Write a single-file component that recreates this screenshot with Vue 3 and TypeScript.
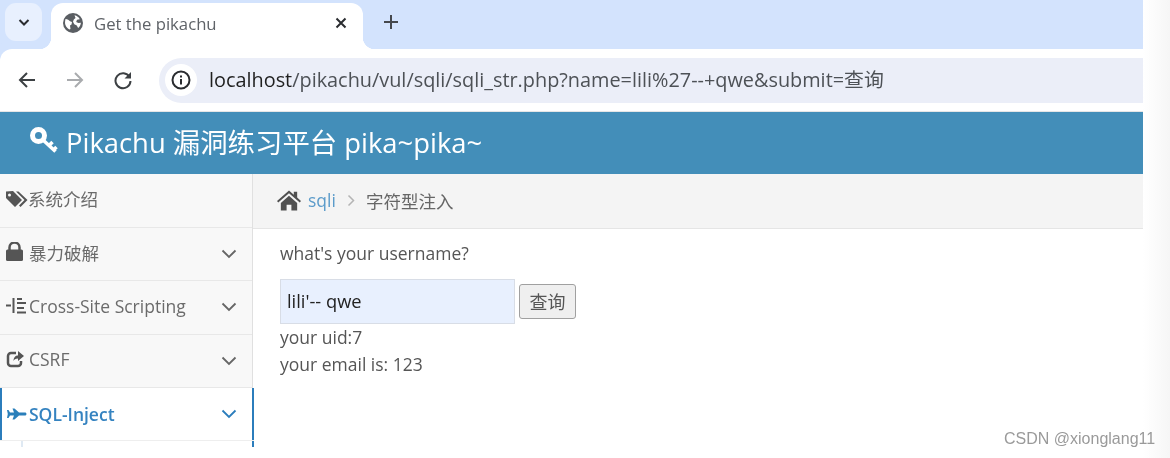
<template>
  <div class="shot">
    <div class="browser">
      <div class="tabstrip">
        <button class="tablist">
          <svg width="14" height="14" viewBox="0 0 14 14"><path d="M2.500 5l4.500 4.500L11.500 5" fill="none" stroke="#2a2c30" stroke-width="2" /></svg>
        </button>
        <div class="tab">
          <svg width="20" height="20" viewBox="0 0 20 20" class="globe">
            <circle cx="10" cy="10" r="10" fill="#5a5e63" />
            <path d="M2.500 6c2 .3 3.500 1 4.500 2.200l2 .8-.5 2.500-1.500 1 .5 3.500-1.200.5C4 15 2 12.500 2 10c0-1.500.2-2.800.5-4zM11.500 2.200c2.500.5 4.300 2 5.300 4l-2.800.6-.8 2.200 2.300 1 2.400-.2c-.2 2-1.200 4-2.800 5.200l-1.300-2.600-2.500-1.200-1.300-2.400.8-2.200 1.700-1.600z" fill="#fff" />
          </svg>
          <span class="tab-title">{{ tabTitle }}</span>
          <svg class="tab-close" width="12" height="12" viewBox="0 0 12 12"><path d="M1.500 1.500l9 9M10.500 1.500l-9 9" stroke="#2a2c30" stroke-width="2" /></svg>
        </div>
        <svg class="newtab" width="16" height="16" viewBox="0 0 16 16"><path d="M8 1v14M1 8h14" stroke="#45484d" stroke-width="2" /></svg>
      </div>
      <div class="toolbar">
        <svg class="nav" width="20" height="20" viewBox="0 0 20 20"><path d="M18 10H3M10 3l-7 7 7 7" fill="none" stroke="#3c4043" stroke-width="2" /></svg>
        <svg class="nav" width="20" height="20" viewBox="0 0 20 20"><path d="M2 10h15M10 3l7 7-7 7" fill="none" stroke="#a9abae" stroke-width="2" /></svg>
        <svg class="nav" width="20" height="20" viewBox="0 0 20 20"><path d="M16.500 7A7.500 7.500 0 1 0 17.500 11" fill="none" stroke="#3c4043" stroke-width="2" /><path d="M18 2v6.500h-6.500z" fill="#3c4043" /></svg>
        <div class="omnibox">
          <span class="site-info">
            <svg width="20" height="20" viewBox="0 0 20 20"><circle cx="10" cy="10" r="8.500" fill="none" stroke="#2a2c30" stroke-width="2" /><path d="M10 9v5.500M10 5.500v2" stroke="#2a2c30" stroke-width="2" /></svg>
          </span>
          <span class="url"><b>localhost</b>{{ urlPath }}</span>
        </div>
      </div>
    </div>

    <header class="navbar">
      <svg width="28" height="27" viewBox="0 0 28 27" class="key">
        <circle cx="8.500" cy="8.500" r="6" fill="none" stroke="#fff" stroke-width="5" />
        <path d="M12.500 12.500l13 12M19 18.500l3.500-3.500M23.500 23l3-3" fill="none" stroke="#fff" stroke-width="3.500" />
      </svg>
      <span>Pikachu 漏洞练习平台 pika~pika~</span>
    </header>

    <div class="main">
      <aside class="sidebar">
        <div v-for="item in menu" :key="item.label" class="item" :class="{ active: item.active }">
          <svg class="item-icon" width="24" height="20" viewBox="0 0 24 20" v-html="item.icon"></svg>
          <span class="item-label" :class="item.cls">{{ item.label }}</span>
          <svg v-if="item.arrow" class="chev" width="16" height="10" viewBox="0 0 16 10"><path d="M1.500 1.500L8 8l6.500-6.500" fill="none" stroke="currentColor" stroke-width="1.800" /></svg>
        </div>
        <div class="submenu"></div>
      </aside>

      <section class="content">
        <div class="crumbs">
          <svg width="24" height="21" viewBox="0 0 25 21"><path d="M12.500 0L0 11l1.300 1.500L12.500 3l11.200 9.500L25 11l-4-3.500V1.500h-3.500v3zM4 13v8h6v-6h5v6h6v-8l-8.500-7.500z" fill="#505050" /></svg>
          <a class="crumb-link">sqli</a>
          <svg width="9" height="13" viewBox="0 0 9 13"><path d="M1.500 1.500l5 5-5 5" fill="none" stroke="#b4b4b4" stroke-width="1.500" /></svg>
          <span class="crumb-now">字符型注入</span>
        </div>
        <div class="page">
          <p class="ask">what's your username?</p>
          <form class="query" @submit.prevent>
            <input class="name-input" :value="name" />
            <button class="submit">查询</button>
          </form>
          <p class="line">your uid:7</p>
          <p class="line">your email is: 123</p>
        </div>
      </section>
    </div>

    <div class="edge"></div>
    <div class="mark">CSDN @xionglang11</div>
  </div>
</template>

<script setup lang="ts">
const tabTitle = 'Get the pikachu'
const urlPath = '/pikachu/vul/sqli/sqli_str.php?name=lili%27--+qwe&submit=查询'
const name = "lili'-- qwe"

interface MenuItem {
  label: string
  icon: string
  arrow: boolean
  active?: boolean
  cls?: string
}

const menu: MenuItem[] = [
  {
    label: '系统介绍',
    arrow: false,
    cls: 'tight',
    icon: '<path d="M0 2.500V9l9 9 7-7-9-9zM3.500 4.500a1.500 1.500 0 1 1 0 3 1.500 1.500 0 0 1 0-3z" fill="#555" fill-rule="evenodd"/><path d="M10 2.500h2.500l9 8.500-7 7-1.500-1.500 5.500-5.500z" fill="#555"/>',
  },
  {
    label: '暴力破解',
    arrow: true,
    icon: '<path d="M3.500 8V5.500a5 5 0 0 1 10 0V8" fill="none" stroke="#555" stroke-width="2.500"/><rect x="0" y="7.500" width="17" height="11.500" rx="1.500" fill="#555"/>',
  },
  {
    label: 'Cross-Site Scripting',
    arrow: true,
    icon: '<path d="M0 9.500h5M7.500 2v15M11 3h5M11 7h9M11 12h7M11 16.500h9" fill="none" stroke="#555" stroke-width="2"/>',
  },
  {
    label: 'CSRF',
    arrow: true,
    icon: '<path d="M10 4H5a3 3 0 0 0-3 3v7a3 3 0 0 0 3 3h7a3 3 0 0 0 3-3v-2" fill="none" stroke="#555" stroke-width="2.500"/><path d="M12 2l6 5-6 5V9.500c-2.500 0-4 1-4.500 2.500 0-3.500 2-5.500 4.500-5.500z" fill="#555"/>',
  },
  {
    label: 'SQL-Inject',
    arrow: true,
    active: true,
    icon: '<path d="M1 6h1.500l1.500 2.500h4L6.500 4.500h2L13 8.500h6c.8 0 1.500.7 1.500 1.500s-.7 1.500-1.500 1.500h-6l-4.500 4h-2L8 11.500H4L2.500 14H1l.8-4z" fill="#2a7fba"/>',
  },
]
</script>

<style scoped>
.shot {
  position: relative;
  width: 1170px;
  height: 458px;
  overflow: hidden;
  background: #fff;
  font-family: "Open Sans", "Noto Sans CJK SC", sans-serif;
  color: #555;
  filter: blur(0.4px);
}

.tabstrip {
  display: flex;
  align-items: flex-start;
  height: 49px;
  width: 1143px;
  padding: 3px 0 0 5px;
  box-sizing: border-box;
  background: #d3e3fd;
}

.tablist {
  display: flex;
  align-items: center;
  justify-content: center;
  width: 37px;
  height: 38px;
  padding: 0;
  border: 0;
  border-radius: 11px;
  background: #e8f0fe;
}

.tab {
  position: relative;
  display: flex;
  align-items: center;
  width: 312px;
  height: 46px;
  margin-left: 9px;
  padding: 0 16px 6px 12px;
  box-sizing: border-box;
  background: #fff;
  border-radius: 12px 12px 0 0;
}

.tab::before,
.tab::after {
  content: "";
  position: absolute;
  bottom: 0;
  width: 12px;
  height: 12px;
}

.tab::before {
  left: -12px;
  background: radial-gradient(circle at 0 0, transparent 12px, #fff 12.500px);
}

.tab::after {
  right: -12px;
  background: radial-gradient(circle at 100% 0, transparent 12px, #fff 12.500px);
}

.tab-title {
  flex: 1;
  margin-left: 11px;
  font-size: 16.700px;
  color: #5f6368;
}

.newtab {
  margin: 11px 0 0 20px;
}

.toolbar {
  display: flex;
  align-items: center;
  width: 1143px;
  height: 63px;
  padding: 1px 0 1px 17px;
  box-sizing: border-box;
  background: #fff;
  border-radius: 12px 0 0 0;
  box-shadow: 0 -12px 0 #d3e3fd;
  border-bottom: 1px solid #e6e6e6;
}

.nav {
  flex: none;
  margin-right: 28px;
}

.nav:nth-child(3) {
  margin-right: 26px;
}

.omnibox {
  flex: 1;
  display: flex;
  align-items: center;
  height: 45px;
  padding-left: 6px;
  border-radius: 23px 0 0 23px;
  background: #ebeef8;
}

.site-info {
  display: flex;
  align-items: center;
  justify-content: center;
  width: 32px;
  height: 32px;
  border-radius: 50%;
  background: #fff;
}

.url {
  margin-left: 12px;
  padding-bottom: 3px;
  font-size: 19.860px;
  color: #4d5156;
}

.url b {
  font-weight: 400;
  color: #1f1f1f;
}

.navbar {
  display: flex;
  align-items: center;
  gap: 8px;
  width: 1143px;
  height: 62px;
  padding: 0 0 5px 30px;
  box-sizing: border-box;
  background: #438eb9;
  color: #fff;
  font-size: 27.400px;
}

.main {
  display: flex;
  width: 1143px;
}

.sidebar {
  flex: none;
  width: 253px;
  height: 273px;
  box-sizing: border-box;
  border-right: 1px solid #e0e0e0;
  background: #f8f8f8;
}

.item {
  display: flex;
  align-items: center;
  height: 53.500px;
  padding: 0 15px 3px 6px;
  box-sizing: border-box;
  border-bottom: 1px solid #e8e8e8;
  font-size: 17.500px;
  color: #6b6b6b;
}

.item-icon {
  flex: none;
  margin-right: -1px;
}

.item-label {
  flex: 1;
}

.item-label.tight {
  margin-left: -1px;
}

.chev {
  color: #666;
  margin-top: 3px;
}

.item.active {
  height: 53px;
  margin-right: -2px;
  padding-right: 17px;
  padding-bottom: 1px;
  background: #fff;
  color: #3583c0;
  font-weight: 600;
  box-shadow: inset 2px 0 0 #2b7dbc, inset -2px 0 0 #2b7dbc;
  border-bottom-color: #eee;
}

.item.active .chev {
  color: #2b7dbc;
  margin-top: 0;
}

.submenu {
  height: 6px;
  margin-right: -2px;
  background: linear-gradient(90deg, #fff 21px, #dfe9f3 21px, #dfe9f3 23px, #fff 23px);
  box-shadow: inset -2px 0 0 #2b7dbc;
}

.content {
  flex: 1;
}

.crumbs {
  display: flex;
  align-items: center;
  height: 55px;
  padding: 0 0 2px 24px;
  box-sizing: border-box;
  background: #f4f4f4;
  border-bottom: 1px solid #e5e5e5;
  font-size: 17.500px;
}

.crumb-link {
  margin-left: 7px;
  color: #5b9bca;
}

.crumbs > svg:nth-of-type(2) {
  margin-left: 11px;
}

.crumb-now {
  margin-left: 10px;
  color: #666;
}

.page {
  padding: 11px 26px 0 27px;
}

p {
  margin: 0;
  font-size: 17.500px;
  line-height: 27px;
  color: #555;
}

.query {
  display: flex;
  align-items: center;
  gap: 4px;
  margin: 12px 0 0;
}

.name-input {
  width: 235px;
  height: 45px;
  padding: 0 6px 2px;
  box-sizing: border-box;
  border: 1px solid #d8dde6;
  background: #e8f0fe;
  font: 18.300px "Open Sans", sans-serif;
  color: #222;
  outline: none;
}

.submit {
  width: 57px;
  height: 35px;
  padding: 0 0 2px;
  border: 1.500px solid #a0a0a0;
  border-radius: 3px;
  background: #efefef;
  font: 18px "Noto Sans CJK SC", sans-serif;
  color: #555;
}

.edge {
  position: absolute;
  top: 0;
  right: 0;
  width: 27px;
  height: 458px;
  background: linear-gradient(90deg, #fff, #f6f6f6);
}

.mark {
  position: absolute;
  top: 430px;
  left: 1004px;
  font: 16px "Liberation Sans", sans-serif;
  color: #9a9a9a;
  white-space: nowrap;
}
</style>
